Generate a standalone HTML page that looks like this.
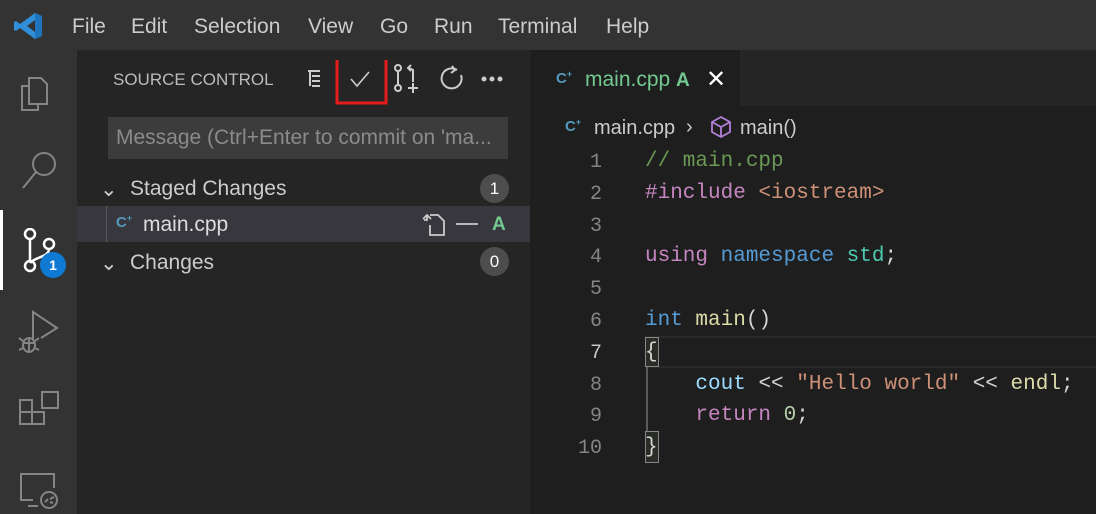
<!DOCTYPE html><html><head><style>
*{margin:0;padding:0;box-sizing:border-box}
body{width:1096px;height:514px;overflow:hidden;background:#1e1e1e;font-family:"Liberation Sans",sans-serif;position:relative}
.abs{position:absolute}
.title{left:0;top:0;width:1096px;height:50px;background:#333}
.menu{top:15px;font-size:21px;color:#ccc}
.act{left:0;top:50px;width:77px;height:464px;background:#333}
.side{left:77px;top:50px;width:453px;height:464px;background:#252526}
.code{font-family:"Liberation Mono",monospace;font-size:21px;color:#d4d4d4;white-space:pre}
.ln{font-family:"Liberation Mono",monospace;font-size:20px;color:#858585;text-align:right}
</style></head><body>
<div class="abs title"></div>
<svg class="abs" style="left:14px;top:12px" width="30" height="28" viewBox="0 0 30 28"><path d="M21 1 L28 4 V24 L21 27 L6 16 L2 19 L0 18 V10 L2 9 L6 12 Z" fill="#2f8fd8"/><path d="M21 8 V20 L13 14 Z" fill="#333"/><path d="M21 1 L28 4 V24 L21 27Z" fill="#1f74c0"/></svg>
<div class="abs menu" style="left:72px">File</div>
<div class="abs menu" style="left:131px">Edit</div>
<div class="abs menu" style="left:194px">Selection</div>
<div class="abs menu" style="left:308px">View</div>
<div class="abs menu" style="left:380px">Go</div>
<div class="abs menu" style="left:434px">Run</div>
<div class="abs menu" style="left:498px">Terminal</div>
<div class="abs menu" style="left:606px">Help</div>
<div class="abs act"></div>
<svg class="abs" style="left:0;top:55px" width="77" height="459" viewBox="0 55 77 459" fill="none" stroke="#858585" stroke-width="2">
<path d="M29 78 h12 l6 6 v20 h-18z M29 86 h-7 v24 h16 v-6"/>
<circle cx="44" cy="164" r="11"/><path d="M36 172 L23 188"/>
<path d="M33 340 V312 L57 328 L41 338"/>
<ellipse cx="29" cy="345" rx="6" ry="7"/><path d="M23 343h12 M19 338l4 3 M39 338l-4 3 M19 350l4 -2 M39 350l-4 -2 M29 338v14"/>
<rect x="20" y="400" width="12" height="12"/><rect x="20" y="412" width="24" height="12"/><rect x="20" y="400" width="12" height="24"/><rect x="42" y="392" width="16" height="16"/>
<path d="M54 488 v-14 h-33 v26 h12 M28 506 h10"/><circle cx="49" cy="500" r="8"/><path d="M45 502l3-3 M50 499l4-2 M50 502l3 1"/>
</svg>
<div class="abs" style="left:0;top:210px;width:3px;height:80px;background:#fff"></div>
<svg class="abs" style="left:22px;top:228px" width="36" height="50" fill="none" stroke="#fff" stroke-width="2.5"><circle cx="8" cy="6" r="5"/><circle cx="8" cy="38" r="5"/><circle cx="27" cy="16" r="5"/><path d="M8 11v22 M27 21c0 8-14 8-19 14"/></svg>
<div class="abs" style="left:40px;top:252px;width:26px;height:26px;border-radius:13px;background:#0e7ad3;color:#fff;font-size:14px;font-weight:bold;text-align:center;line-height:26px">1</div>
<div class="abs side"></div>
<div class="abs" style="left:113px;top:70px;font-size:17px;color:#bbb">SOURCE CONTROL</div>
<svg class="abs" style="left:300px;top:60px" width="220" height="45" fill="none" stroke="#ccc" stroke-width="2">
<path d="M8 11h12 M12 16h8 M12 21h8 M12 26h8 M10 11v15"/>
<path d="M51 19 l6 7 l12 -14" stroke-width="1.6"/>
<rect x="37" y="-7" width="49" height="50" stroke="#e51c1c" stroke-width="3"/>
<circle cx="98" cy="8" r="3"/><circle cx="98" cy="28" r="3"/><path d="M98 11v14 M113 22v-12 l-4-2 M111 5l-3 3 3 3 M108 28h10 M113 23v10"/>
<path d="M157 10 a10 10 0 1 0 4 5 M152 6 l3 4 -4 3"/>
<circle cx="184" cy="19" r="1.5" fill="#ccc"/><circle cx="192" cy="19" r="1.5" fill="#ccc"/><circle cx="200" cy="19" r="1.5" fill="#ccc"/>
</svg>
<div class="abs" style="left:108px;top:117px;width:400px;height:42px;background:#3c3c3c;color:#8b8b8b;font-size:21px;line-height:42px;padding-left:8px">Message (Ctrl+Enter to commit on 'ma...</div>
<div class="abs" style="left:100px;top:177px;font-size:21px;color:#ccc">⌄</div>
<div class="abs" style="left:130px;top:177px;font-size:21px;color:#ccc">Staged Changes</div>
<div class="abs" style="left:480px;top:174px;width:29px;height:29px;border-radius:15px;background:#4d4d4d;color:#fff;font-size:17px;text-align:center;line-height:29px">1</div>
<div class="abs" style="left:77px;top:206px;width:453px;height:36px;background:#37373d"></div>
<div class="abs" style="left:106px;top:206px;width:1px;height:36px;background:#585858"></div>
<div class="abs" style="left:116px;top:213px;font-size:15px;font-weight:bold;color:#519aba">C<sup style="font-size:9px">+</sup></div>
<div class="abs" style="left:143px;top:213px;font-size:21px;color:#ddd">main.cpp</div>
<svg class="abs" style="left:420px;top:210px" width="60" height="28" fill="none" stroke="#ccc" stroke-width="1.8"><path d="M10 5h8l6 6v14h-14v-10 M3 9 l4 -4 4 4 M7 5v5h-3"/><path d="M36 14h22"/></svg>
<div class="abs" style="left:492px;top:214px;font-size:19px;font-weight:bold;color:#73c991">A</div>
<div class="abs" style="left:100px;top:251px;font-size:21px;color:#ccc">⌄</div>
<div class="abs" style="left:130px;top:251px;font-size:21px;color:#ccc">Changes</div>
<div class="abs" style="left:480px;top:247px;width:29px;height:29px;border-radius:15px;background:#4d4d4d;color:#fff;font-size:17px;text-align:center;line-height:29px">0</div>
<div class="abs" style="left:740px;top:50px;width:356px;height:56px;background:#252526"></div>
<div class="abs" style="left:556px;top:69px;font-size:15px;font-weight:bold;color:#519aba">C<sup style="font-size:9px">+</sup></div>
<div class="abs" style="left:585px;top:68px;font-size:21px;color:#73c991">main.cpp <b style="font-size:19px">A</b></div>
<div class="abs" style="left:706px;top:65px;font-size:24px;color:#fff">✕</div>
<div class="abs" style="left:565px;top:117px;font-size:15px;font-weight:bold;color:#519aba">C<sup style="font-size:9px">+</sup></div>
<div class="abs" style="left:594px;top:117px;font-size:20px;color:#ccc">main.cpp</div>
<div class="abs" style="left:686px;top:116px;font-size:20px;color:#ccc">›</div>
<svg class="abs" style="left:709px;top:114px" width="26" height="26" fill="none" stroke="#b180d7" stroke-width="1.8"><path d="M12 3l9 5v10l-9 5-9-5V8z M3 8l9 5 9-5 M12 13v10"/></svg>
<div class="abs" style="left:740px;top:117px;font-size:20px;color:#ccc">main()</div>
<div class="abs" style="left:645px;top:336px;width:451px;height:32px;border-top:2px solid #282828;border-bottom:2px solid #282828"></div>
<div class="abs" style="left:645px;top:337px;width:14px;height:30px;border:1px solid #888;background:#2a2d25"></div>
<div class="abs" style="left:645px;top:431px;width:14px;height:32px;border:1px solid #888;background:#2a2d25"></div>
<div class="abs" style="left:646px;top:367px;width:2px;height:64px;background:#5a5a5a"></div>
<div class="abs ln" style="left:540px;top:147px;width:62px;line-height:31.8px">1<br>2<br>3<br>4<br>5<br>6<br><span style="color:#c6c6c6">7</span><br>8<br>9<br>10</div>
<div class="abs code" style="left:645px;top:146px;line-height:31.8px"><span style="color:#6a9955">// main.cpp</span>
<span style="color:#c586c0">#include</span> <span style="color:#ce9178">&lt;iostream&gt;</span>

<span style="color:#c586c0">using</span> <span style="color:#569cd6">namespace</span> <span style="color:#4ec9b0">std</span>;

<span style="color:#569cd6">int</span> <span style="color:#dcdcaa">main</span>()
{
    <span style="color:#9cdcfe">cout</span> &lt;&lt; <span style="color:#ce9178">"Hello world"</span> &lt;&lt; <span style="color:#dcdcaa">endl</span>;
    <span style="color:#c586c0">return</span> <span style="color:#b5cea8">0</span>;
}</div>
</body></html>
